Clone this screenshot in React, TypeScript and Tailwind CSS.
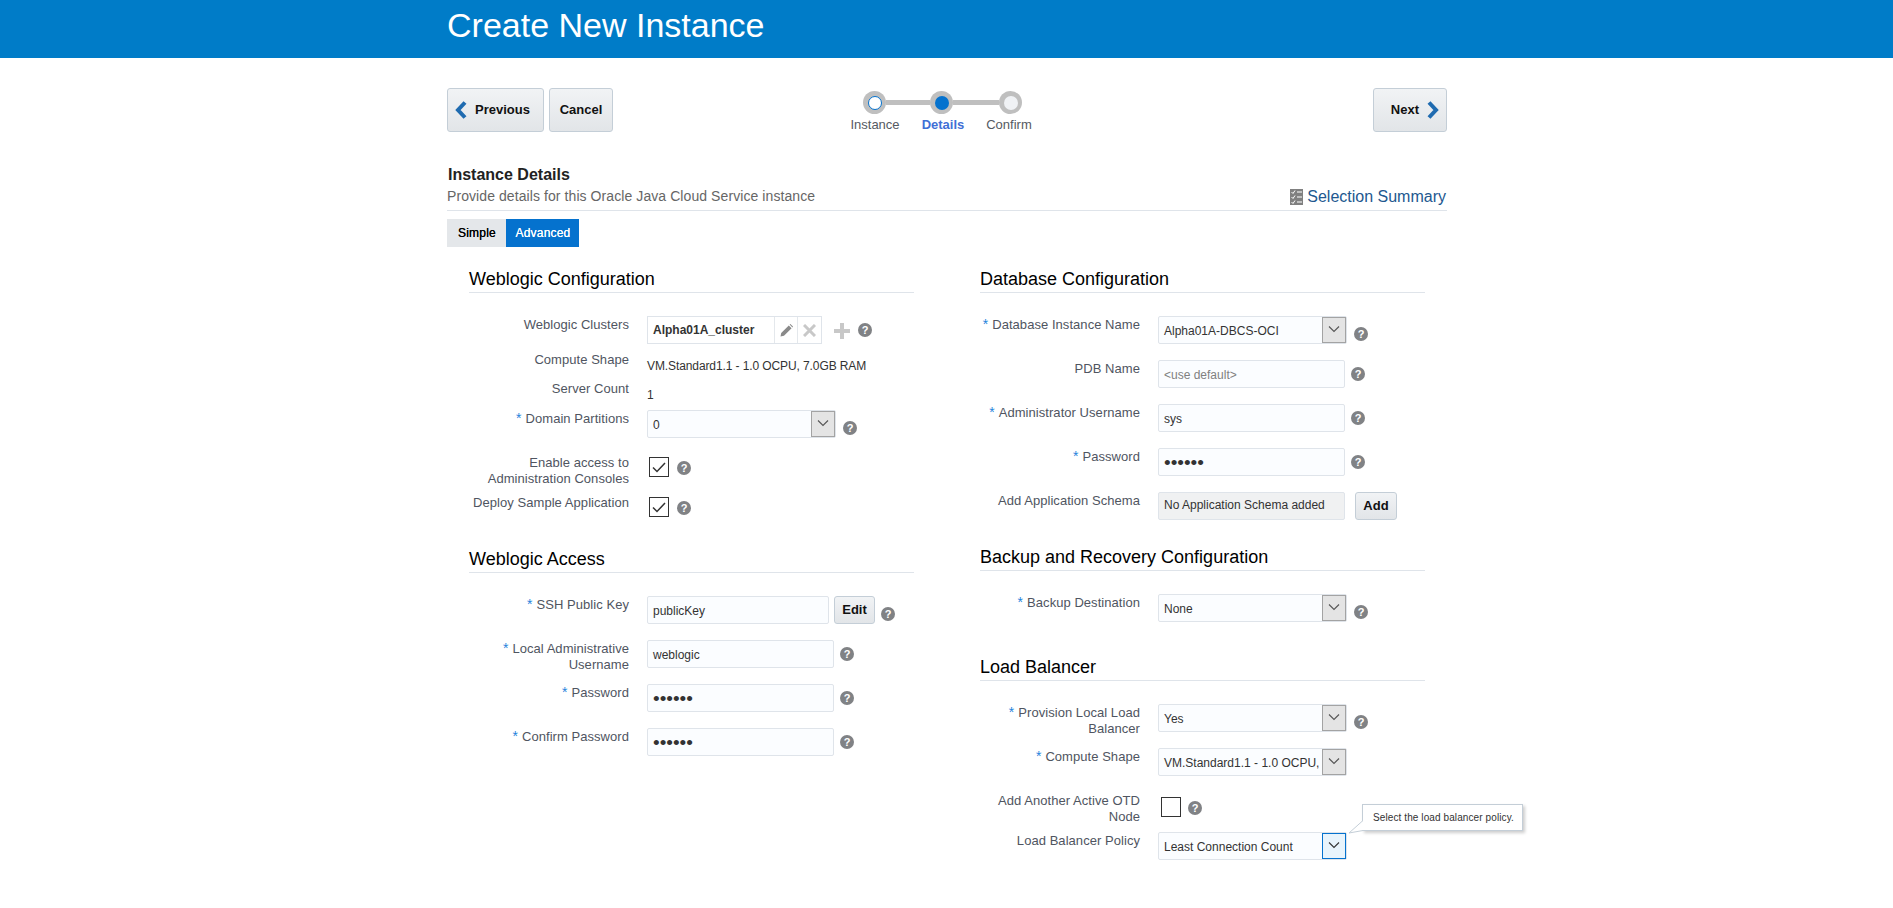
import React from "react";

function Help({ className = "" }: { className?: string }) {
  return (
    <span className={`flex h-[14px] w-[14px] shrink-0 items-center justify-center rounded-full bg-[#808285] text-[11px] font-bold leading-none text-white ${className}`}>?</span>
  );
}

function Row({ label, req, className = "", children }: { label: React.ReactNode; req?: boolean; className?: string; children: React.ReactNode }) {
  return (
    <div className={`flex items-start ${className}`}>
      <div className="w-[160px] shrink-0 pt-px text-right text-[13px] leading-[16px] tracking-[0.05px] text-[#4f5561]">
        {req && <span className="mr-[4px] text-[14px] leading-none text-[#1f84dc]">*</span>}
        {label}
      </div>
      <div className="ml-[18px] flex items-start">{children}</div>
    </div>
  );
}

function Input({ value, className = "w-[187px]", muted }: { value: string; className?: string; muted?: boolean }) {
  return (
    <div className={`flex h-[28px] items-center rounded-[2px] border border-[#dfe4ea] bg-[#fbfdff] pl-[5px] pt-px text-[12px] ${muted ? "text-[#808080]" : "text-[#333333]"} ${className}`}>
      {value}
    </div>
  );
}

function Password() {
  return (
    <div className="flex h-[28px] w-[187px] items-center overflow-hidden rounded-[2px] border border-[#dfe4ea] bg-[#fbfdff] pl-[5px] text-[19px] leading-none text-[#333333]">
      ••••••
    </div>
  );
}

function Chevron({ dark }: { dark?: boolean }) {
  return (
    <svg width="12" height="8" viewBox="0 0 12 8" fill="none" className="-mt-[2px]">
      <path d="M1 1.5 L6 6.5 L11 1.5" stroke={dark ? "#333333" : "#555555"} strokeWidth="1.1" />
    </svg>
  );
}

function Select({ value, focused }: { value: string; focused?: boolean }) {
  return (
    <div className="flex h-[28px] w-[189px] items-stretch rounded-[2px] border border-[#dfe4ea] bg-[#fbfdff] text-[12px] text-[#333333]">
      <div className="flex min-w-0 flex-1 items-center whitespace-nowrap pl-[5px] pt-px">{value}</div>
      <div className={`flex w-[24px] shrink-0 items-center justify-center border ${focused ? "border-[#0572ce] bg-[#e8f4fc]" : "border-[#a3a3a3] bg-[#e4e4e4]"}`}>
        <Chevron dark={focused} />
      </div>
    </div>
  );
}

function Check({ checked, className = "" }: { checked?: boolean; className?: string }) {
  return (
    <div className={`flex h-[20px] w-[20px] shrink-0 items-center justify-center border border-[#333333] bg-white ${className}`}>
      {checked && (
        <svg width="14" height="11" viewBox="0 0 14 11" fill="none">
          <path d="M1 5.5 L5 9.5 L13 1" stroke="#333333" strokeWidth="1.5" />
        </svg>
      )}
    </div>
  );
}

function Btn({ children, className = "" }: { children: React.ReactNode; className?: string }) {
  return (
    <div className={`flex items-center rounded-[3px] border border-[#c4ced7] bg-gradient-to-b from-[#f1f3f5] to-[#e2e5e8] text-[13px] font-bold text-[#111111] ${className}`}>
      {children}
    </div>
  );
}

function Heading({ children, className = "" }: { children: React.ReactNode; className?: string }) {
  return (
    <div className={`h-[26px] border-b border-[#dfe4ea] text-[18px] leading-[24px] text-[#000000] ${className}`}>{children}</div>
  );
}

function Step({ state }: { state: "done" | "active" | "todo" }) {
  return (
    <div className="flex h-[23px] w-[23px] shrink-0 items-center justify-center rounded-full bg-[#bfbfbf]">
      {state === "done" && <div className="h-[14px] w-[14px] rounded-full border border-[#0572ce] bg-white" />}
      {state === "active" && <div className="h-[14px] w-[14px] rounded-full bg-[#0572ce]" />}
      {state === "todo" && <div className="h-[14px] w-[14px] rounded-full bg-[#f0f2f5]" />}
    </div>
  );
}

export default function App() {
  return (
    <div className="min-h-[908px] bg-white font-['Liberation_Sans',Arial,sans-serif]">
      <div className="h-[58px] bg-[#007cc8]">
        <div className="ml-[447px] text-[34px] leading-[50px] text-white">Create New Instance</div>
      </div>

      <div className="ml-[447px] w-[1000px]">
        {/* toolbar */}
        <div className="mt-[30px] flex h-[44px] items-start">
          <Btn className="h-[44px] w-[97px] gap-[8px] pl-[7px]">
            <svg width="12" height="18" viewBox="0 0 12 18" fill="none">
              <path d="M10 1.5 L3 9 L10 16.5" stroke="#1f6bb0" strokeWidth="4" />
            </svg>
            Previous
          </Btn>
          <Btn className="ml-[5px] h-[44px] w-[64px] justify-center">Cancel</Btn>
          <div className="ml-[247px] w-[204px]">
            <div className="ml-[3px] mt-[3px] flex items-center">
              <Step state="done" />
              <div className="h-[5px] w-[44px] bg-[#bfbfbf]" />
              <Step state="active" />
              <div className="h-[5px] w-[46px] bg-[#bfbfbf]" />
              <Step state="todo" />
            </div>
            <div className="mt-[3px] flex text-center text-[13px] leading-[16px] text-[#555a62]">
              <div className="-ml-[19px] w-[68px]">Instance</div>
              <div className="w-[68px] font-bold text-[#3f6fd6]">Details</div>
              <div className="w-[64px]">Confirm</div>
            </div>
          </div>
          <Btn className="ml-auto h-[44px] w-[74px] justify-end gap-[8px] pr-[7px]">
            Next
            <svg width="12" height="18" viewBox="0 0 12 18" fill="none">
              <path d="M2 1.5 L9 9 L2 16.5" stroke="#1f6bb0" strokeWidth="4" />
            </svg>
          </Btn>
        </div>

        {/* title */}
        <div className="mt-[34px] pl-px text-[16px] font-bold leading-[18px] text-[#222222]">Instance Details</div>
        <div className="flex h-[27px] items-start justify-between border-b border-[#dfe4ea] pt-[4px]">
          <div className="text-[14px] leading-[16px] tracking-[0.08px] text-[#666666]">Provide details for this Oracle Java Cloud Service instance</div>
          <div className="mr-px mt-px flex items-center gap-[4px] text-[16px] leading-[16px] text-[#22588f]">
            <svg width="13" height="16" viewBox="0 0 13 16">
              <rect width="13" height="16" fill="#808080" />
              <path d="M1.5 3 L3 4.5 L5 1.5 M1.5 8 L3 9.5 L5 6.5 M1.5 13 L3 14.5 L5 11.5" stroke="#fff" strokeWidth="1" fill="none" />
              <path d="M7 3 H12 M7 8 H12 M7 13 H12" stroke="#fff" strokeWidth="1.2" />
            </svg>
            Selection Summary
          </div>
        </div>

        {/* tabs */}
        <div className="mt-[8px] flex h-[28px] text-[12px] tracking-[0.2px]">
          <div className="flex w-[59px] items-center justify-center bg-[#e4e7ea] pl-px text-[#000000] [text-shadow:0_0_0.6px_#000000]">Simple</div>
          <div className="flex w-[73px] items-center justify-center bg-[#0572ce] pl-px text-white [text-shadow:0_0_0.6px_#ffffff]">Advanced</div>
        </div>

        {/* form */}
        <div className="ml-[22px] mt-[20px] grid grid-cols-[445px_445px] gap-x-[66px]">
          <div>
            <Heading>Weblogic Configuration</Heading>
            <Row label="Weblogic Clusters" className="mt-[23px]">
              <div className="flex h-[28px] w-[175px] items-stretch border border-[#dfe4ea] bg-white text-[12px]">
                <div className="flex flex-1 items-center pl-[5px] font-bold text-[#333333]">Alpha01A_cluster</div>
                <div className="flex w-[23px] items-center justify-center border-l border-[#e4e8ec]">
                  <svg width="13" height="13" viewBox="0 0 13 13">
                    <path d="M0.5 12.5 L1.2 9 L8.8 1.4 L11.6 4.2 L4 11.8 Z M9.6 0.6 L10.4 0 L13 2.6 L12.4 3.4 Z" fill="#8a8a8a" />
                  </svg>
                </div>
                <div className="flex w-[24px] items-center justify-center border-l border-[#e4e8ec]">
                  <svg width="13" height="13" viewBox="0 0 13 13" fill="none">
                    <path d="M1 1 L12 12 M12 1 L1 12" stroke="#c8c8c8" strokeWidth="3" />
                  </svg>
                </div>
              </div>
              <svg width="16" height="16" viewBox="0 0 16 16" className="ml-[12px] mt-[7px]">
                <path d="M6 0 H10 V6 H16 V10 H10 V16 H6 V10 H0 V6 H6 Z" fill="#c8c8c8" />
              </svg>
              <Help className="ml-[8px] mt-[7px]" />
            </Row>
            <Row label="Compute Shape" className="mt-[7px]">
              <div className="mt-[7px] text-[12px] leading-[16px] tracking-[-0.1px] text-[#333333]">VM.Standard1.1 - 1.0 OCPU, 7.0GB RAM</div>
            </Row>
            <Row label="Server Count" className="mt-[6px]">
              <div className="mt-[7px] text-[12px] leading-[16px] text-[#333333]">1</div>
            </Row>
            <Row label="Domain Partitions" req className="mt-[7px]">
              <Select value="0" />
              <Help className="ml-[7px] mt-[11px]" />
            </Row>
            <Row label={<>Enable access to<br />Administration Consoles</>} className="mt-[16px]">
              <Check checked className="ml-[2px] mt-[3px]" />
              <Help className="ml-[8px] mt-[7px]" />
            </Row>
            <Row label="Deploy Sample Application" className="mt-[7px]">
              <Check checked className="ml-[2px] mt-[3px]" />
              <Help className="ml-[8px] mt-[7px]" />
            </Row>

            <Heading className="mt-[30px]">Weblogic Access</Heading>
            <Row label="SSH Public Key" req className="mt-[23px]">
              <Input value="publicKey" className="w-[182px]" />
              <Btn className="ml-[5px] h-[28px] w-[41px] justify-center text-[12px]">Edit</Btn>
              <Help className="ml-[6px] mt-[11px]" />
            </Row>
            <Row label={<>Local Administrative<br />Username</>} req className="mt-[16px]">
              <Input value="weblogic" />
              <Help className="ml-[6px] mt-[7px]" />
            </Row>
            <Row label="Password" req className="mt-[11px]">
              <Password />
              <Help className="ml-[6px] mt-[7px]" />
            </Row>
            <Row label="Confirm Password" req className="mt-[16px]">
              <Password />
              <Help className="ml-[6px] mt-[7px]" />
            </Row>
          </div>

          <div>
            <Heading>Database Configuration</Heading>
            <Row label="Database Instance Name" req className="mt-[23px]">
              <Select value="Alpha01A-DBCS-OCI" />
              <Help className="ml-[7px] mt-[11px]" />
            </Row>
            <Row label="PDB Name" className="mt-[16px]">
              <Input value="<use default>" muted />
              <Help className="ml-[6px] mt-[7px]" />
            </Row>
            <Row label="Administrator Username" req className="mt-[16px]">
              <Input value="sys" />
              <Help className="ml-[6px] mt-[7px]" />
            </Row>
            <Row label="Password" req className="mt-[16px]">
              <Password />
              <Help className="ml-[6px] mt-[7px]" />
            </Row>
            <Row label="Add Application Schema" className="mt-[16px]">
              <div className="flex h-[28px] w-[187px] items-start rounded-[2px] border border-[#dfe4ea] bg-[#f0f1f2] pl-[5px] pt-[3px] text-[12px] text-[#333333]">No Application Schema added</div>
              <Btn className="ml-[10px] h-[28px] w-[42px] justify-center text-[12px]">Add</Btn>
            </Row>

            <Heading className="mt-[25px]">Backup and Recovery Configuration</Heading>
            <Row label="Backup Destination" req className="mt-[23px]">
              <Select value="None" />
              <Help className="ml-[7px] mt-[11px]" />
            </Row>

            <Heading className="mt-[33px]">Load Balancer</Heading>
            <Row label={<>Provision Local Load<br />Balancer</>} req className="mt-[23px]">
              <Select value="Yes" />
              <Help className="ml-[7px] mt-[11px]" />
            </Row>
            <Row label="Compute Shape" req className="mt-[11px]">
              <Select value="VM.Standard1.1 - 1.0 OCPU," />
            </Row>
            <Row label={<>Add Another Active OTD<br />Node</>} className="mt-[16px]">
              <Check className="ml-[3px] mt-[5px]" />
              <Help className="ml-[7px] mt-[9px]" />
            </Row>
            <div className="relative">
              <Row label="Load Balancer Policy" className="mt-[7px]">
                <Select value="Least Connection Count" focused />
              </Row>
              <div className="absolute left-[382px] top-[-28px] flex h-[27px] w-[161px] items-center whitespace-nowrap border border-[#c4ced7] bg-white pl-[10px] text-[10px] tracking-[0.1px] text-[#333333] shadow-[2px_2px_3px_rgba(0,0,0,0.2)]">
                Select the load balancer policy.
              </div>
              <svg width="16" height="14" viewBox="0 0 16 14" className="absolute left-[368px] top-[-12px]" fill="none">
                <path d="M15 0.5 L1 13 L15 10.5" fill="#fff" stroke="#c4ced7" />
              </svg>
            </div>
          </div>
        </div>
      </div>
    </div>
  );
}
